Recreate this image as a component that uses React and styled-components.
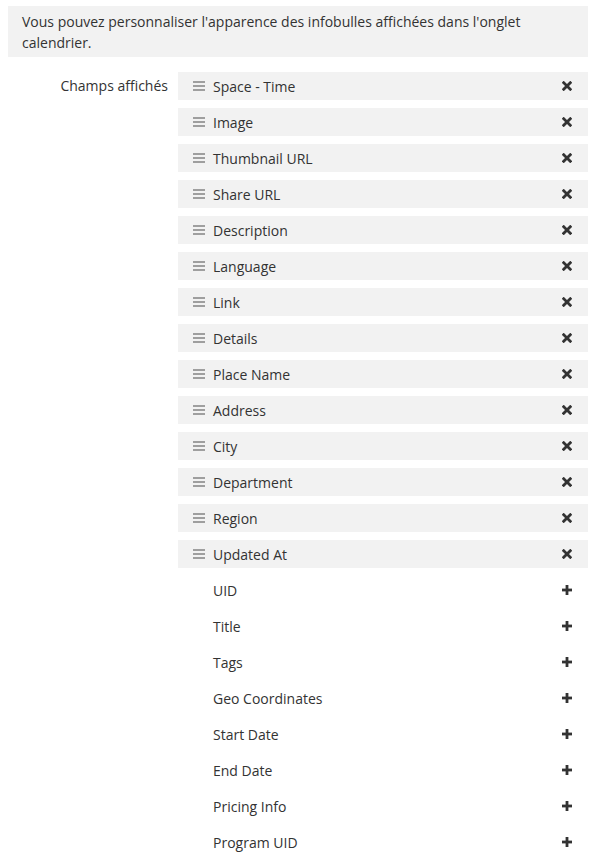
import React from "react";
import styled, { createGlobalStyle } from "styled-components";

const GlobalStyle = createGlobalStyle`
  body {
    margin: 0;
    background: #fff;
    font-family: "Open Sans", "Noto Sans", sans-serif;
    color: #333;
  }
`;

const Page = styled.div`
  width: 596px;
  padding: 6px 8px 0 8px;
  box-sizing: border-box;
`;

const Notice = styled.div`
  background: #f2f2f2;
  padding: 5px 14px 4px;
  font-size: 14px;
  line-height: 21px;
  color: #333;
`;

const Field = styled.div`
  display: grid;
  grid-template-columns: 170px 1fr;
  margin-top: 15px;
`;

const Label = styled.div`
  text-align: right;
  padding-right: 10px;
  font-size: 14px;
  line-height: 28px;
  color: #333;
`;

const List = styled.div`
  display: flex;
  flex-direction: column;
  gap: 8px;
`;

const Row = styled.div`
  display: flex;
  align-items: center;
  height: 28px;
  padding: 0 16px 0 15px;
  background: ${({ selected }) => (selected ? "#f2f2f2" : "transparent")};
  font-size: 14px;
  color: #333;
`;

const Handle = styled.span`
  width: 12px;
  height: 12px;
  margin-right: 8px;
  display: flex;
  visibility: ${({ hidden }) => (hidden ? "hidden" : "visible")};
`;

const Name = styled.span`
  flex: 1;
`;

const Action = styled.span`
  width: 10px;
  height: 10px;
  display: flex;
`;

const selected = [
  "Space - Time",
  "Image",
  "Thumbnail URL",
  "Share URL",
  "Description",
  "Language",
  "Link",
  "Details",
  "Place Name",
  "Address",
  "City",
  "Department",
  "Region",
  "Updated At",
];

const available = [
  "UID",
  "Title",
  "Tags",
  "Geo Coordinates",
  "Start Date",
  "End Date",
  "Pricing Info",
  "Program UID",
];

const Bars = () => (
  <svg width="12" height="12" viewBox="0 0 12 12">
    <g stroke="#8a8a8a" strokeWidth="1.6">
      <line x1="0" y1="2" x2="12" y2="2" />
      <line x1="0" y1="6" x2="12" y2="6" />
      <line x1="0" y1="10" x2="12" y2="10" />
    </g>
  </svg>
);

const Cross = () => (
  <svg width="10" height="10" viewBox="0 0 10 10">
    <g stroke="#333" strokeWidth="2.8" strokeLinecap="square">
      <line x1="1.7" y1="1.7" x2="8.3" y2="8.3" />
      <line x1="8.3" y1="1.7" x2="1.7" y2="8.3" />
    </g>
  </svg>
);

const Plus = () => (
  <svg width="10" height="10" viewBox="0 0 10 10">
    <g fill="#333">
      <rect x="3.6" y="0" width="2.8" height="10" />
      <rect x="0" y="3.6" width="10" height="2.8" />
    </g>
  </svg>
);

export default function App() {
  return (
    <Page>
      <GlobalStyle />
      <Notice>
        Vous pouvez personnaliser l'apparence des infobulles affichées dans l'onglet
        calendrier.
      </Notice>
      <Field>
        <Label>Champs affichés</Label>
        <List>
          {selected.map((name) => (
            <Row key={name} selected>
              <Handle>
                <Bars />
              </Handle>
              <Name>{name}</Name>
              <Action>
                <Cross />
              </Action>
            </Row>
          ))}
          {available.map((name) => (
            <Row key={name}>
              <Handle hidden />
              <Name>{name}</Name>
              <Action>
                <Plus />
              </Action>
            </Row>
          ))}
        </List>
      </Field>
    </Page>
  );
}
